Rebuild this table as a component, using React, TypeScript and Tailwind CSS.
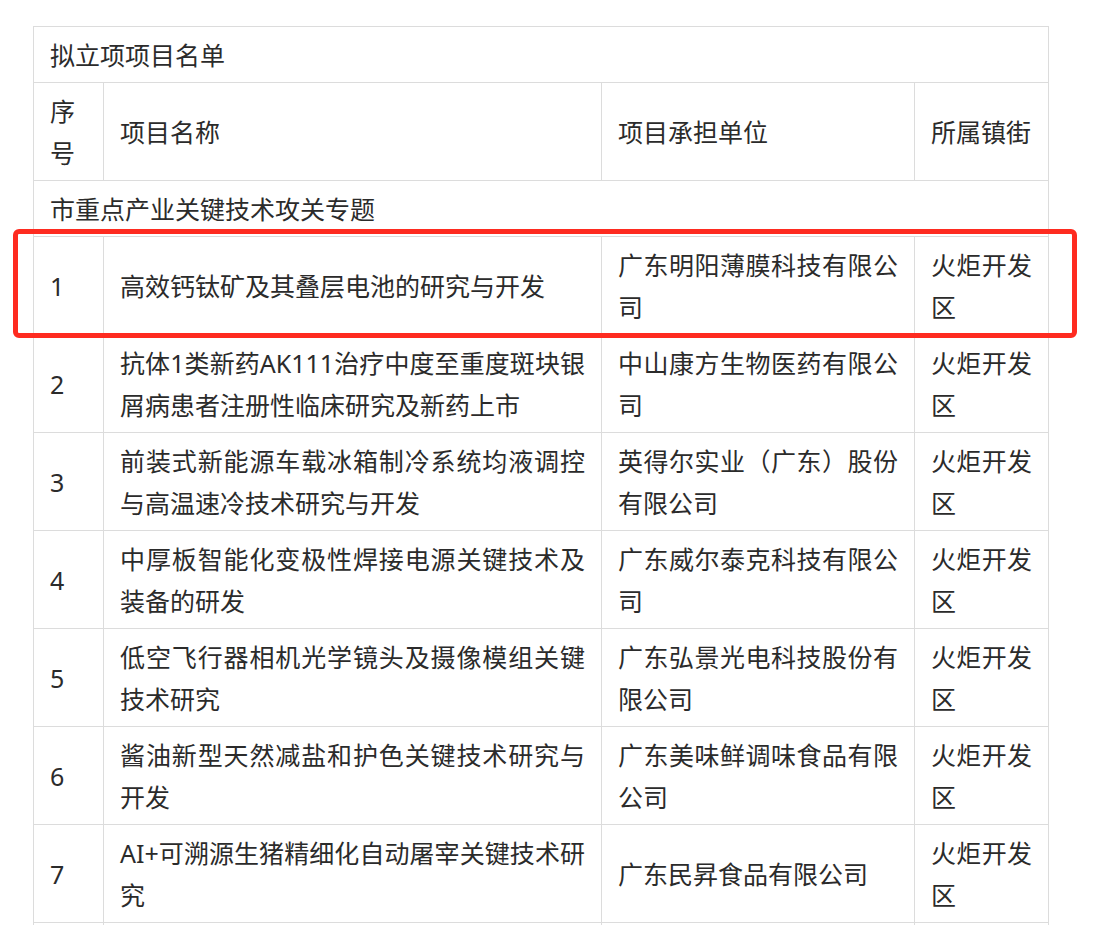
import React from "react";

const rows: { n: string; name: string; unit: string; town: string }[] = [
  { n: "1", name: "高效钙钛矿及其叠层电池的研究与开发", unit: "广东明阳薄膜科技有限公司", town: "火炬开发区" },
  { n: "2", name: "抗体1类新药AK111治疗中度至重度斑块银屑病患者注册性临床研究及新药上市", unit: "中山康方生物医药有限公司", town: "火炬开发区" },
  { n: "3", name: "前装式新能源车载冰箱制冷系统均液调控与高温速冷技术研究与开发", unit: "英得尔实业（广东）股份有限公司", town: "火炬开发区" },
  { n: "4", name: "中厚板智能化变极性焊接电源关键技术及装备的研发", unit: "广东威尔泰克科技有限公司", town: "火炬开发区" },
  { n: "5", name: "低空飞行器相机光学镜头及摄像模组关键技术研究", unit: "广东弘景光电科技股份有限公司", town: "火炬开发区" },
  { n: "6", name: "酱油新型天然减盐和护色关键技术研究与开发", unit: "广东美味鲜调味食品有限公司", town: "火炬开发区" },
  { n: "7", name: "AI+可溯源生猪精细化自动屠宰关键技术研究", unit: "广东民昇食品有限公司", town: "火炬开发区" },
];

const cell = "border border-[#dcdcdc] px-4 py-[6.5px] align-middle text-justify";

export default function App() {
  return (
    <div
      className="relative w-[1111px] h-[925px] overflow-hidden bg-white text-[#2b2b2b] text-[25px] leading-[42px]"
      style={{ fontFamily: '"Noto Sans", "Noto Sans CJK SC", sans-serif' }}
    >
      <table className="ml-[33px] mt-[26px] w-[1015px] table-fixed border-collapse">
        <colgroup>
          <col className="w-[70px]" />
          <col className="w-[498px]" />
          <col className="w-[313px]" />
          <col className="w-[134px]" />
        </colgroup>
        <tbody>
          <tr>
            <td colSpan={4} className={cell}>
              拟立项项目名单
            </td>
          </tr>
          <tr>
            <td className={cell}>序号</td>
            <td className={cell}>项目名称</td>
            <td className={cell}>项目承担单位</td>
            <td className={cell}>所属镇街</td>
          </tr>
          <tr>
            <td colSpan={4} className={cell}>
              市重点产业关键技术攻关专题
            </td>
          </tr>
          {rows.map((r) => (
            <tr key={r.n}>
              <td className={cell}>{r.n}</td>
              <td className={cell}>{r.name}</td>
              <td className={cell}>{r.unit}</td>
              <td className={cell}>{r.town}</td>
            </tr>
          ))}
          <tr className="h-[56px]">
            <td className={cell}></td>
            <td className={cell}></td>
            <td className={cell}></td>
            <td className={cell}></td>
          </tr>
        </tbody>
      </table>
      <div className="pointer-events-none absolute left-[13px] top-[229px] h-[109px] w-[1064px] rounded-[6px] border-[5px] border-[#fe2b20]" />
    </div>
  );
}
